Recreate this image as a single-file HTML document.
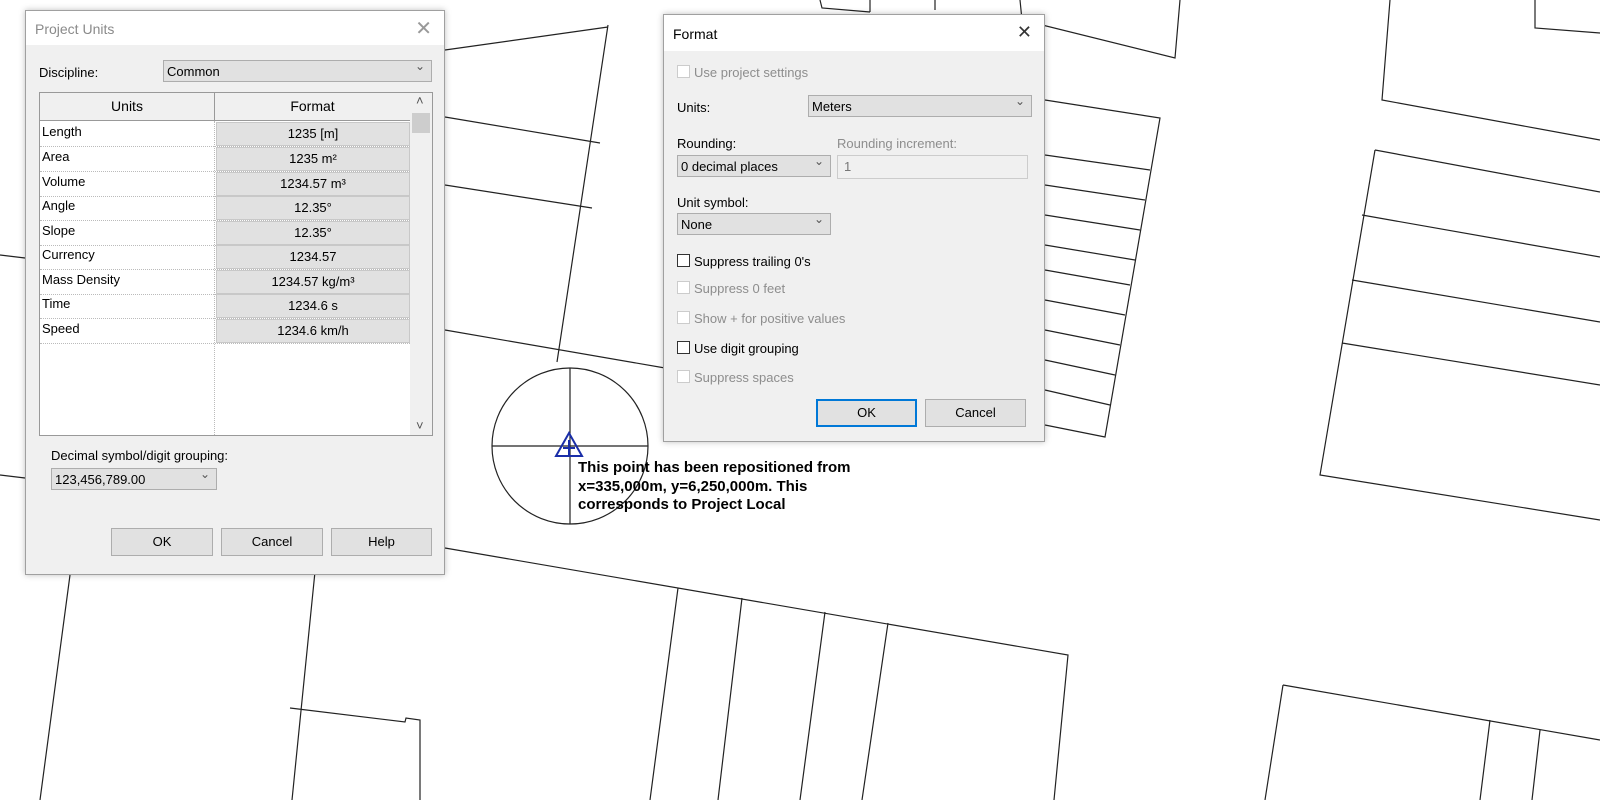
<!DOCTYPE html><html><head><meta charset="utf-8"><style>
body{margin:0;width:1600px;height:800px;background:#fff;position:relative;overflow:hidden;font-family:"Liberation Sans",Arial,sans-serif;font-size:13px;color:#000}
.a{position:absolute}
.dlg{position:absolute;background:#f0f0f0;border:1px solid #a0a0a0;box-shadow:0 0 6px rgba(0,0,0,.25)}
.tb{position:absolute;left:0;top:0;right:0;background:#fff}
.sel{position:absolute;background:#e1e1e1;border:1px solid #adadad;box-sizing:border-box;padding:2px 3px;line-height:17px}
.sel:after{content:"⌄";position:absolute;right:6px;top:-3px;color:#555;font-size:12px}
.btn{position:absolute;background:#e1e1e1;border:1px solid #adadad;box-sizing:border-box;text-align:center;line-height:26px}
.cb{position:absolute;width:13px;height:13px;border:1px solid #333;background:#fff;box-sizing:border-box}
.dis{color:#8d8d8d}
.dis .cb{border-color:#ccc}
.row{position:absolute;left:0;width:370px;height:25px;border-bottom:1px dotted #bbb}
.row .n{position:absolute;left:2px;top:3px}
.row .v{position:absolute;left:176px;width:192px;top:1px;height:22px;background:#e1e1e1;border:1px solid #c8c8c8;text-align:center;line-height:21px}
</style></head><body>
<svg class="a" style="left:0;top:0" width="1600" height="800" fill="none" stroke="#222" stroke-width="1.2">
<path d="M608 25 L557 362 M445 50 L608 27 M445 117 L600 143 M445 185 L592 208 M445 330 L665 368"/>
<path d="M0 255 L25 258 M0 475 L25 478"/>
<path d="M820 0 L822 8 L870 12 M870 0 L870 12 M935 0 L935 10 M1020 0 L1022 20 L1175 58 L1180 0 M1045 100 L1160 118 L1105 437 L1045 425"/>
<path d="M1045 155 L1150 170 M1045 185 L1145 200 M1045 215 L1140 230 M1045 245 L1135 260 M1045 270 L1130 285 M1045 300 L1125 315 M1045 330 L1120 345 M1045 360 L1115 375 M1045 390 L1110 405"/>
<path d="M1390 0 L1382 100 L1600 140 M1535 0 L1535 28 L1600 33"/>
<path d="M1375 150 L1600 192 M1375 150 L1320 475 L1600 520 M1362 215 L1600 257 M1352 280 L1600 322 M1342 343 L1600 385"/>
<path d="M445 548 L1068 655 L1054 800 M320 522 L292 800 M70 575 L40 800 M678 588 L650 800 M742 598 L718 800 M825 612 L800 800 M888 623 L862 800 M290 708 L405 722 L406 718 L420 720 L420 800"/>
<path d="M1283 685 L1600 740 M1283 685 L1265 800 M1490 720 L1480 800 M1540 730 L1532 800"/>
<circle cx="570" cy="446" r="78"/>
<path d="M570 368 L570 524 M492 446 L648 446"/>
<path d="M569 433 L556 456 L582 456 Z M569 440 L569 455 M563 448 L575 448" stroke="#1a2ea8" stroke-width="2"/>
</svg>
<div class="a" style="left:578px;top:459px;font-weight:bold;font-size:15px;line-height:18.5px">This point has been repositioned from<br>x=335,000m, y=6,250,000m. This<br>corresponds to Project Local</div>

<div class="dlg" style="left:25px;top:10px;width:418px;height:563px">
<div class="tb" style="height:34px"><span class="a" style="left:9px;top:10px;font-size:14px;color:#8a8a8a">Project Units</span><span class="a" style="right:12px;top:5px;font-size:20px;color:#999">✕</span></div>
<div class="a" style="left:13px;top:54px">Discipline:</div>
<div class="sel" style="left:137px;top:49px;width:269px;height:22px">Common</div>
<div class="a" style="left:13px;top:81px;width:392px;height:342px;background:#fff;border:1px solid #999">
<div class="a" style="left:0;top:0;width:174px;height:27px;background:#f0f0f0;border-right:1px solid #999;border-bottom:1px solid #999;text-align:center;line-height:27px;font-size:14px">Units</div>
<div class="a" style="left:175px;top:0;width:195px;height:27px;background:#f0f0f0;border-bottom:1px solid #999;text-align:center;line-height:27px;font-size:14px">Format</div>
<div class="a" style="left:174px;top:28px;height:314px;border-left:1px dotted #bbb"></div>
<div class="a" style="left:370px;top:0;width:22px;height:342px;background:#f0f0f0"><div class="a" style="left:2px;top:20px;width:18px;height:20px;background:#cdcdcd"></div><span class="a" style="left:6px;top:0;color:#555">˄</span><span class="a" style="left:6px;bottom:2px;color:#555">˅</span></div>
<div class="row" style="top:28px"><span class="n">Length</span><span class="v">1235 [m]</span></div>
<div class="row" style="top:53px"><span class="n">Area</span><span class="v">1235 m²</span></div>
<div class="row" style="top:78px"><span class="n">Volume</span><span class="v">1234.57 m³</span></div>
<div class="row" style="top:102px"><span class="n">Angle</span><span class="v">12.35°</span></div>
<div class="row" style="top:127px"><span class="n">Slope</span><span class="v">12.35°</span></div>
<div class="row" style="top:151px"><span class="n">Currency</span><span class="v">1234.57</span></div>
<div class="row" style="top:176px"><span class="n">Mass Density</span><span class="v">1234.57 kg/m³</span></div>
<div class="row" style="top:200px"><span class="n">Time</span><span class="v">1234.6 s</span></div>
<div class="row" style="top:225px"><span class="n">Speed</span><span class="v">1234.6 km/h</span></div>
</div>
<div class="a" style="left:25px;top:437px">Decimal symbol/digit grouping:</div>
<div class="sel" style="left:25px;top:457px;width:166px;height:22px">123,456,789.00</div>
<div class="btn" style="left:85px;top:517px;width:102px;height:28px">OK</div>
<div class="btn" style="left:195px;top:517px;width:102px;height:28px">Cancel</div>
<div class="btn" style="left:305px;top:517px;width:101px;height:28px">Help</div>
</div>

<div class="dlg" style="left:663px;top:14px;width:380px;height:426px">
<div class="tb" style="height:36px"><span class="a" style="left:9px;top:11px;font-size:14px">Format</span><span class="a" style="right:12px;top:7px;font-size:18px;color:#333">✕</span></div>
<div class="dis"><div class="cb" style="left:13px;top:50px"></div><span class="a" style="left:30px;top:50px">Use project settings</span></div>
<div class="a" style="left:13px;top:85px">Units:</div>
<div class="sel" style="left:144px;top:80px;width:224px;height:22px">Meters</div>
<div class="a" style="left:13px;top:121px">Rounding:</div>
<div class="a dis" style="left:173px;top:121px">Rounding increment:</div>
<div class="sel" style="left:13px;top:140px;width:154px;height:22px">0 decimal places</div>
<div class="a" style="left:173px;top:140px;width:191px;height:24px;border:1px solid #ccc;box-sizing:border-box;padding:3px 6px;color:#777">1</div>
<div class="a" style="left:13px;top:180px">Unit symbol:</div>
<div class="sel" style="left:13px;top:198px;width:154px;height:22px">None</div>
<div class="cb" style="left:13px;top:239px"></div><span class="a" style="left:30px;top:239px">Suppress trailing 0's</span>
<div class="dis"><div class="cb" style="left:13px;top:266px"></div><span class="a" style="left:30px;top:266px">Suppress 0 feet</span></div>
<div class="dis"><div class="cb" style="left:13px;top:296px"></div><span class="a" style="left:30px;top:296px">Show + for positive values</span></div>
<div class="cb" style="left:13px;top:326px"></div><span class="a" style="left:30px;top:326px">Use digit grouping</span>
<div class="dis"><div class="cb" style="left:13px;top:355px"></div><span class="a" style="left:30px;top:355px">Suppress spaces</span></div>
<div class="btn" style="left:152px;top:384px;width:101px;height:28px;border:2px solid #0078d7;line-height:24px">OK</div>
<div class="btn" style="left:261px;top:384px;width:101px;height:28px">Cancel</div>
</div>
</body></html>
